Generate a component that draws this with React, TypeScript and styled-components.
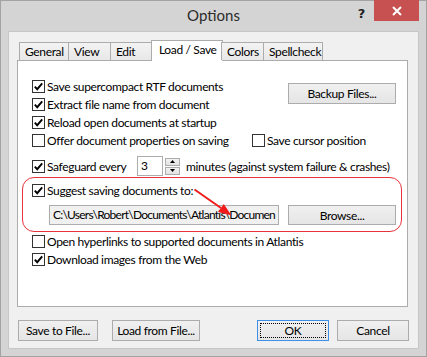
import styled, { createGlobalStyle, css } from 'styled-components';

const GlobalStyle = createGlobalStyle`
  html, body {
    margin: 0;
    padding: 0;
    background: #ffffff;
  }
  body {
    font-family: Lato, 'Noto Sans', sans-serif;
    font-size: 12px;
    letter-spacing: -0.35px;
    color: #000000;
  }
  * {
    box-sizing: border-box;
  }
`;

const Window = styled.div`
  width: 427px;
  height: 357px;
  background: #d4d4d4;
  border: 1px solid #a3a3a3;
  display: flex;
  flex-direction: column;
  padding: 0 7px 7px;
`;

const TitleBar = styled.div`
  height: 30px;
  display: grid;
  grid-template-columns: 1fr auto 1fr;
  align-items: start;
`;

const Title = styled.div`
  grid-column: 2;
  font-size: 15px;
  letter-spacing: 0;
  line-height: 29px;
  color: #2b2b2b;
`;

const Controls = styled.div`
  grid-column: 3;
  justify-self: end;
  display: flex;
  align-items: flex-start;
  margin-top: -1px;
`;

const HelpGlyph = styled.span`
  font-family: 'DejaVu Sans', sans-serif;
  font-weight: 700;
  font-size: 13px;
  line-height: 13px;
  color: #222222;
  margin: 7px 9px 0 0;
`;

const CloseButton = styled.div`
  width: 45px;
  height: 21px;
  background: #c75050;
  display: flex;
  align-items: center;
  justify-content: center;
`;

const Client = styled.div`
  flex: 1;
  background: #f0f0f0;
  border: 1px solid #c6c6c6;
  padding: 8px 0 0 8px;
  display: flex;
  flex-direction: column;
`;

const TabBar = styled.div`
  display: flex;
  align-items: flex-end;
  height: 21px;
  padding-left: 2px;
  margin-bottom: -1px;
  position: relative;
  z-index: 1;
`;

const Tab = styled.div<{ $w: number; $active?: boolean }>`
  width: ${(p) => p.$w}px;
  height: 18px;
  margin: 0 0 1px -1px;
  padding-left: 5px;
  border: 1px solid #acacac;
  border-bottom: none;
  background: linear-gradient(#f3f3f3, #e8e8e8);
  line-height: 17px;
  white-space: nowrap;

  &:first-child {
    margin-left: 0;
  }

  ${(p) =>
    p.$active &&
    css`
      height: 21px;
      margin: 0 -1px 0 -2px;
      padding-left: 7px;
      background: #ffffff;
      line-height: 18px;
    `}
`;

const Panel = styled.div`
  width: 391px;
  height: 247px;
  background: #ffffff;
  border: 1px solid #acacac;
  padding: 16px 11px 0 14px;
  display: flex;
  flex-direction: column;
`;

const TopGrid = styled.div`
  display: grid;
  grid-template-columns: 220px 1fr;
  grid-template-rows: repeat(4, 18px);
`;

const CheckRow = styled.label<{ $col?: number; $row?: number }>`
  display: flex;
  align-items: center;
  height: 18px;
  white-space: nowrap;
  grid-column: ${(p) => p.$col ?? 1};
  grid-row: ${(p) => p.$row ?? 'auto'};
`;

const Box = styled.span`
  width: 13px;
  height: 13px;
  flex: none;
  border: 1px solid #333333;
  background: #ffffff;
  margin-right: 2px;
  display: flex;
  align-items: center;
  justify-content: center;
`;

const Button = styled.button<{ $w: number; $h?: number; $default?: boolean }>`
  width: ${(p) => p.$w}px;
  height: ${(p) => p.$h ?? 21}px;
  flex: none;
  padding: 0;
  border: 1px solid #acacac;
  background: linear-gradient(#f0f0f0, #e5e5e5);
  font-family: inherit;
  font-size: 12px;
  letter-spacing: inherit;
  color: #000000;
  white-space: nowrap;
  position: relative;

  ${(p) =>
    p.$default &&
    css`
      border-color: #3c8ee6;
      &::after {
        content: '';
        position: absolute;
        inset: 2px;
        border: 1px dotted #000000;
      }
    `}
`;

const BackupButton = styled(Button)`
  grid-column: 2;
  grid-row: 1 / span 2;
  justify-self: end;
  align-self: start;
  margin-top: 6px;
`;

const SafeRow = styled.div`
  display: flex;
  align-items: center;
  height: 20px;
  margin-top: 7px;
  white-space: nowrap;
`;

const SafeLabel = styled.span`
  width: 90px;
`;

const SpinInput = styled.div`
  width: 26px;
  height: 20px;
  border: 1px solid #acacac;
  background: #ffffff;
  padding-left: 3px;
  line-height: 18px;
`;

const Spin = styled.div`
  display: flex;
  flex-direction: column;
  gap: 1px;
  margin: 0 6px 0 2px;
`;

const SpinButton = styled.div`
  width: 15px;
  height: 8px;
  border: 1px solid #acacac;
  background: linear-gradient(#f2f2f2, #e2e2e2);
  display: flex;
  align-items: center;
  justify-content: center;
`;

const RedBox = styled.div`
  position: relative;
  margin: 1px -6px 0 -10px;
  border: 1.5px solid #e8323c;
  border-radius: 12px;
  padding: 3px 5px 6px 9px;
`;

const PathRow = styled.div`
  display: flex;
  align-items: center;
  margin-top: 6px;
  padding-left: 17px;
`;

const PathBox = styled.div`
  width: 230px;
  height: 20px;
  border: 1px solid #adadad;
  background: #f0f0f0;
  padding-left: 3px;
  line-height: 18px;
  letter-spacing: -0.75px;
  white-space: nowrap;
  overflow: hidden;
`;

const BrowseButton = styled(Button)`
  margin-left: auto;
`;

const Arrow = styled.svg`
  position: absolute;
  left: 160px;
  top: 5px;
  overflow: visible;
`;

const Footer = styled.div`
  display: flex;
  align-items: center;
  margin-top: 13px;
  padding: 0 9px 0 1px;
`;

const ButtonGroup = styled.div<{ $gap: number }>`
  display: flex;
  gap: ${(p) => p.$gap}px;
`;

const Spacer = styled.div`
  flex: 1;
`;

const Check = () => (
  <svg width="11" height="11" viewBox="0 0 11 11">
    <path d="M1.8 5.6 L4.2 8.2 L9.2 2.4" fill="none" stroke="#000" strokeWidth="1.9" />
  </svg>
);

const CheckBox = ({ checked }: { checked?: boolean }) => <Box>{checked && <Check />}</Box>;

const App = () => (
  <>
    <GlobalStyle />
    <Window>
      <TitleBar>
        <Title>Options</Title>
        <Controls>
          <HelpGlyph>?</HelpGlyph>
          <CloseButton>
            <svg width="10" height="10" viewBox="0 0 10 10">
              <path d="M1 1 L9 9 M9 1 L1 9" stroke="#fff" strokeWidth="2" />
            </svg>
          </CloseButton>
        </Controls>
      </TitleBar>
      <Client>
        <TabBar>
          <Tab $w={50}>General</Tab>
          <Tab $w={43}>View</Tab>
          <Tab $w={43}>Edit</Tab>
          <Tab $w={72} $active>
            Load / Save
          </Tab>
          <Tab $w={43}>Colors</Tab>
          <Tab $w={60}>Spellcheck</Tab>
        </TabBar>
        <Panel>
          <TopGrid>
            <CheckRow $row={1}>
              <CheckBox checked />
              Save supercompact RTF documents
            </CheckRow>
            <CheckRow $row={2}>
              <CheckBox checked />
              Extract file name from document
            </CheckRow>
            <CheckRow $row={3}>
              <CheckBox checked />
              Reload open documents at startup
            </CheckRow>
            <CheckRow $row={4}>
              <CheckBox />
              Offer document properties on saving
            </CheckRow>
            <BackupButton $w={108}>Backup Files...</BackupButton>
            <CheckRow $col={2} $row={4}>
              <CheckBox />
              Save cursor position
            </CheckRow>
          </TopGrid>
          <SafeRow>
            <CheckBox checked />
            <SafeLabel>Safeguard every</SafeLabel>
            <SpinInput>3</SpinInput>
            <Spin>
              <SpinButton>
                <svg width="5" height="3" viewBox="0 0 5 3">
                  <path d="M0 3 L2.5 0 L5 3 Z" fill="#000" />
                </svg>
              </SpinButton>
              <SpinButton>
                <svg width="5" height="3" viewBox="0 0 5 3">
                  <path d="M0 0 L2.5 3 L5 0 Z" fill="#000" />
                </svg>
              </SpinButton>
            </Spin>
            minutes (against system failure &amp; crashes)
          </SafeRow>
          <RedBox>
            <CheckRow>
              <CheckBox checked />
              Suggest saving documents to:
            </CheckRow>
            <PathRow>
              <PathBox>C:\Users\Robert\Documents\Atlantis\Documen</PathBox>
              <BrowseButton $w={108} $h={20}>
                Browse...
              </BrowseButton>
            </PathRow>
            <Arrow width="60" height="40" viewBox="0 0 60 40">
              <line x1="11.5" y1="6.5" x2="38" y2="25" stroke="#f01c1c" strokeWidth="2" />
              <polygon points="48.5,32.5 35,29.1 40.8,20.9" fill="#f01c1c" />
            </Arrow>
          </RedBox>
          <CheckRow>
            <CheckBox />
            Open hyperlinks to supported documents in Atlantis
          </CheckRow>
          <CheckRow>
            <CheckBox checked />
            Download images from the Web
          </CheckRow>
        </Panel>
        <Footer>
          <ButtonGroup $gap={14}>
            <Button $w={80}>Save to File...</Button>
            <Button $w={88}>Load from File...</Button>
          </ButtonGroup>
          <Spacer />
          <ButtonGroup $gap={8}>
            <Button $w={72} $default>
              OK
            </Button>
            <Button $w={72}>Cancel</Button>
          </ButtonGroup>
        </Footer>
      </Client>
    </Window>
  </>
);

export default App;
